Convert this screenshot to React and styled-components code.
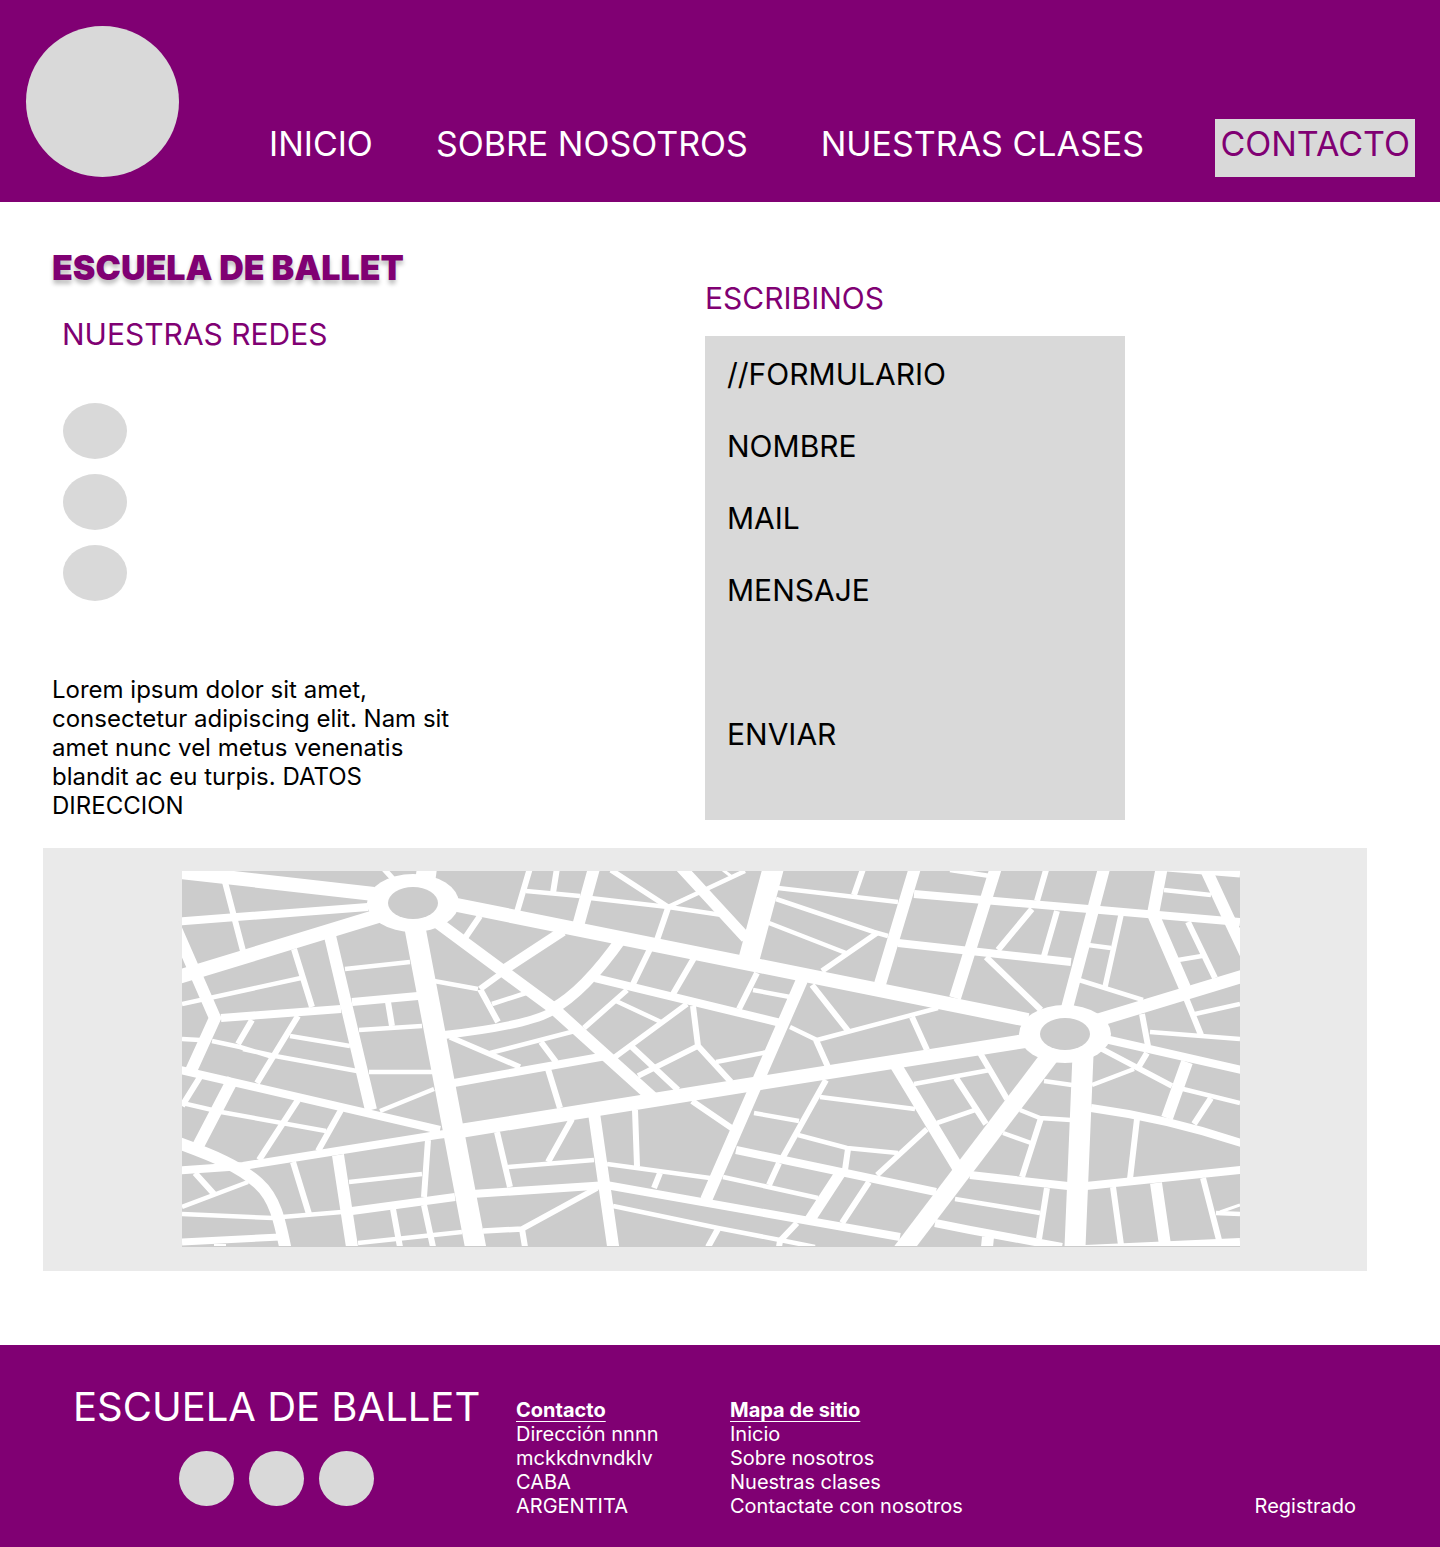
import React from "react";
import styled, { createGlobalStyle } from "styled-components";

const purple = "#800073";
const placeholder = "#d9d9d9";

const GlobalStyle = createGlobalStyle`
  *, *::before, *::after { box-sizing: border-box; }
  body {
    margin: 0;
    background: #fff;
    color: #000;
    font-family: Inter, "Liberation Sans", sans-serif;
  }
  h1, h2, h3, p, ul { margin: 0; padding: 0; font-weight: 400; }
  ul { list-style: none; }
  a { color: inherit; text-decoration: none; }
`;

/* Header */

const Header = styled.header`
  display: flex;
  justify-content: space-between;
  align-items: flex-end;
  gap: 90px;
  padding: 26px 25px 25px 26px;
  background: ${purple};
`;

const Logo = styled.a`
  flex: none;
  width: 153px;
  height: 151px;
  border-radius: 50%;
  background: ${placeholder};
`;

const Nav = styled.nav`
  flex: 1;
  display: grid;
  grid-template-columns: 167fr 385fr 395fr 199fr;
`;

const NavLink = styled.a`
  padding: 3px ${(p) => (p.$active ? "5px" : "0")} 12px;
  background: ${(p) => (p.$active ? placeholder : "transparent")};
  color: ${(p) => (p.$active ? purple : "#fff")};
  font-size: 34px;
  line-height: 43px;
  white-space: nowrap;
`;

/* Contact section */

const Columns = styled.div`
  display: grid;
  grid-template-columns: 653fr 735fr;
  padding: 45px 0 28px 52px;
`;

const Title = styled.h1`
  color: ${purple};
  font-size: 34px;
  font-weight: 900;
  line-height: 42px;
  text-shadow: 0 4px 4px rgba(0, 0, 0, 0.25);
`;

const SectionTitle = styled.h2`
  color: ${purple};
  font-size: 30px;
  line-height: 36px;
`;

const Networks = styled.section`
  padding: 27px 10px 74px;
`;

const NetworkList = styled.ul`
  display: grid;
  gap: 15px;
  padding: 51px 1px 0;
`;

const NetworkLink = styled.a`
  display: block;
  width: 64px;
  height: 56px;
  border-radius: 50%;
  background: ${placeholder};
`;

const Address = styled.p`
  max-width: 420px;
  font-size: 24px;
  line-height: 29px;
`;

const WriteUs = styled.section`
  padding-top: 33px;
`;

const Form = styled.form`
  display: grid;
  gap: 36px;
  max-width: 420px;
  margin-top: 20px;
  padding: 20px 22px 68px;
  background: ${placeholder};
  font-size: 30px;
  line-height: 36px;
`;

const Field = styled.div`
  display: flex;
  gap: 16px;
  height: ${(p) => (p.$tall ? "108px" : "36px")};
`;

const Input = styled.input`
  flex: 1;
  min-width: 0;
  height: 100%;
  padding: 0;
  border: 0;
  outline: 0;
  resize: none;
  background: transparent;
  font: inherit;
`;

const Submit = styled.button`
  justify-self: start;
  padding: 0;
  border: 0;
  background: transparent;
  color: inherit;
  font: inherit;
  cursor: pointer;
`;

/* Map */

const MapPanel = styled.section`
  margin: 0 73px 74px 43px;
  padding: 23px 127px 24px 139px;
  background: #eaeaea;
`;

const MapDrawing = styled.svg`
  display: block;
  width: 100%;
  height: auto;
  background: #ccc;
`;

/* Streets grouped by the width of the road. */
const streets = [
  [3, "M723 870L732 877M1220 1212L1240 1205"],
  [
    4.5,
    "M526 891L580 896M590 898L668 907L722 915M668 907L745 871M778 888L898 902M776 899L874 932L888 936M769 923L846 953M950 870L990 876M1164 890L1211 895M1178 960L1202 956M1079 980L1143 1000M1088 945L1111 948M1195 1014L1240 1004M1150 1032L1240 1039M1092 1085L1134 1069M1183 1089L1240 1103M182 1004L301 978M345 969L410 962M359 1030L422 1026M182 1039L200 1040M212 1041L240 1047L273 1057M243 1049L275 1056L357 1071M290 1036L350 1046M182 1103L221 1112L326 1131M369 1072L432 1072M380 1111L434 1089M349 1182L422 1174M182 1207L248 1182M182 1214L273 1218M282 1217L342 1212M358 1243L462 1232M508 1167L594 1160M607 1164L710 1178M613 1206L718 1228L780 1240L815 1247M490 1053L575 1031M434 981L478 989M492 1004L526 993M616 1001L661 1022M716 1062L768 1052M753 990L790 997M790 1027L817 1040L938 1008M914 1084L990 1070M937 1123L975 1110M820 1097L915 1109M754 1113L799 1121M798 1135L847 1148L898 1153M723 1177L818 1198M955 1199L1040 1213M1044 1081L1072 1085M1020 1110L1040 1118L1071 1120M1003 1133L1031 1143M1216 1213L1240 1214",
  ],
  [
    5.5,
    "M384 869L394 880M611 870L668 907M877 933L822 971M1121 915L1105 987M1100 1048L1172 1086M483 1231L522 1229L597 1188M450 1037L520 1067M687 1004L615 1057M698 1046L638 1076M927 1129L877 1175M627 990L584 1028",
  ],
  [
    6,
    "M530 868L517 912M557 868L553 893M668 908L657 940M863 869L854 895M1046 870L1037 901M1186 998L1201 1035M1188 922L1215 978M1057 911L1044 956M1032 909L998 950M986 957L1041 1010M1142 1014L1148 1046M1147 1053L1138 1068M1211 1098L1194 1124M294 949L312 1007M225 882L243 951M388 1002L392 1026M252 1020L238 1044M298 1016L257 1083M182 1106L200 1077M298 1100L259 1160M341 1110L318 1151M428 1140L424 1197M293 1162L309 1214M195 1173L214 1194M393 1209L400 1247M424 1205L433 1247M522 1229L525 1247M497 1132L510 1187M572 1119L548 1162M635 1110L637 1166M660 1173L654 1188M718 1229L708 1247M548 1069L560 1108M541 1042L556 1062M480 989L502 973M480 989L498 1022M480 916L465 938M650 949L633 984M694 958L673 994M693 1006L698 1046L731 1082M632 1047L678 1090M757 973L739 1009M812 985L849 1032M816 1040L828 1067M912 1017L927 1050M980 1053L1007 1099M956 1078L986 1124M826 1080L783 1157M779 1163L769 1185M848 1149L845 1170M869 1182L842 1223M797 1223L780 1241L779 1247M692 1101L733 1129M1047 1188L1039 1239M1041 1118L1022 1177M1137 1119L1130 1179M1113 1187L1121 1245M1203 1178L1219 1240",
  ],
  [7, "M1167 868L1240 874M182 1242L280 1237"],
  [
    8,
    "M172 922L368 907M221 1018L341 1009M352 1002L418 996M172 1068L440 1130M460 1132L437 1135L243 1166L172 1171M551 1012Q525 1026 444 1035M914 894L1228 921L1240 922M898 943L1071 962M1105 1039L1250 1072M1091 1108Q1172 1119 1250 1146M606 1185L900 1237M352 1211L455 1197M472 1194L608 1185M454 1083L606 1056M595 978L785 1024M736 1150L936 1192M970 1175L1068 1186M1086 1186L1250 1169M935 1223L970 1230L1062 1247M1085 1249L1240 1242",
  ],
  [10, "M563 931L505 969"],
  [11, "M622 938Q584 992 552 1009M676 862L746 938M841 1172L809 1221"],
  [
    12,
    "M173 922L215 1018L190 1073M233 1079L197 1148M330 936L371 1110M173 1141C215 1156 240 1167 258 1183S280 1222 287 1256M430 917L553 1008L653 1098M596 861L578 926M917 861L880 984M998 861L955 998M1106 861L1067 1008M1163 861L1153 914L1185 988M1202 861L1228 917L1246 955M1187 1062L1167 1118M895 1064L958 1168M594 1113L615 1260M338 1155L354 1260M802 980L706 1200M220 1244L220 1247M988 1237L987 1247M1156 1183L1165 1245",
  ],
  [13, "M1095 1021L1250 974"],
  [14, "M172 979L378 916M172 871L374 894M452 904L1028 1020M1025 1041L710 1091L460 1131"],
  [18, "M1050 1056L892 1264"],
  [20, "M427 868L425 882"],
  [21, "M415 928L478 1260M776 858L749 959M1083 1055L1075 1247"],
];

const roundabouts = [
  { x: 413, y: 903 },
  { x: 1065, y: 1034 },
];

/* Footer */

const Footer = styled.footer`
  display: grid;
  grid-template-columns: 443fr 214fr 626fr;
  padding: 38px 84px 29px 73px;
  background: ${purple};
  color: #fff;
`;

const Brand = styled.div`
  justify-self: start;
  font-size: 40px;
  line-height: 48px;
  white-space: nowrap;
`;

const BrandLinks = styled.ul`
  display: flex;
  justify-content: center;
  gap: 15px;
  margin-top: 20px;
`;

const BrandLink = styled.a`
  display: block;
  width: 55px;
  height: 55px;
  border-radius: 50%;
  background: ${placeholder};
`;

const FooterColumn = styled.div`
  padding-top: 15px;
  font-size: 20px;
  line-height: 24px;
`;

const FooterTitle = styled.h3`
  font-size: 20px;
  font-weight: 700;
  line-height: 24px;
  text-decoration: underline 1px;
  text-decoration-skip-ink: none;
  text-underline-offset: 4px;
`;

const FooterEnd = styled.div`
  display: flex;
  justify-content: space-between;
  align-items: flex-end;
`;

const Registered = styled.p`
  font-size: 20px;
  line-height: 24px;
`;

const networks = ["Facebook", "Instagram", "YouTube"];

function StreetMap() {
  return (
    <MapDrawing viewBox="182 871 1058 376" role="img" aria-label="Mapa">
      <g fill="none" stroke="#fff">
        {streets.map(([width, d]) => (
          <path key={width} d={d} strokeWidth={width} />
        ))}
      </g>
      {roundabouts.map(({ x, y }) => (
        <g key={x}>
          <ellipse cx={x} cy={y} rx="46" ry="29" fill="#fff" />
          <ellipse cx={x} cy={y} rx="25" ry="16" fill="#ccc" />
        </g>
      ))}
      <path d="M182 1246.5H1240" stroke="#ccc" />
    </MapDrawing>
  );
}

export default function App() {
  return (
    <>
      <GlobalStyle />
      <Header>
        <Logo href="#inicio" aria-label="Escuela de ballet" />
        <Nav>
          <NavLink href="#inicio">INICIO</NavLink>
          <NavLink href="#nosotros">SOBRE NOSOTROS</NavLink>
          <NavLink href="#clases">NUESTRAS CLASES</NavLink>
          <NavLink href="#contacto" $active aria-current="page">
            CONTACTO
          </NavLink>
        </Nav>
      </Header>

      <main>
        <Columns>
          <div>
            <Title>ESCUELA DE BALLET</Title>
            <Networks>
              <SectionTitle>NUESTRAS REDES</SectionTitle>
              <NetworkList>
                {networks.map((name) => (
                  <li key={name}>
                    <NetworkLink href="#redes" aria-label={name} />
                  </li>
                ))}
              </NetworkList>
            </Networks>
            <Address>
              Lorem ipsum dolor sit amet, consectetur adipiscing elit. Nam sit
              amet nunc vel metus venenatis blandit ac eu turpis. DATOS
              DIRECCION
            </Address>
          </div>

          <WriteUs>
            <SectionTitle>ESCRIBINOS</SectionTitle>
            <Form onSubmit={(e) => e.preventDefault()}>
              <p>//FORMULARIO</p>
              <Field>
                <label htmlFor="nombre">NOMBRE</label>
                <Input id="nombre" type="text" />
              </Field>
              <Field>
                <label htmlFor="mail">MAIL</label>
                <Input id="mail" type="email" />
              </Field>
              <Field $tall>
                <label htmlFor="mensaje">MENSAJE</label>
                <Input as="textarea" id="mensaje" />
              </Field>
              <Submit type="submit">ENVIAR</Submit>
            </Form>
          </WriteUs>
        </Columns>

        <MapPanel>
          <StreetMap />
        </MapPanel>
      </main>

      <Footer>
        <Brand>
          <p>ESCUELA DE BALLET</p>
          <BrandLinks>
            {networks.map((name) => (
              <li key={name}>
                <BrandLink href="#redes" aria-label={name} />
              </li>
            ))}
          </BrandLinks>
        </Brand>
        <FooterColumn>
          <FooterTitle>Contacto</FooterTitle>
          <p>Dirección nnnn</p>
          <p>mckkdnvndklv</p>
          <p>CABA</p>
          <p>ARGENTITA</p>
        </FooterColumn>
        <FooterEnd>
          <FooterColumn>
            <FooterTitle>Mapa de sitio</FooterTitle>
            <ul>
              <li><a href="#inicio">Inicio</a></li>
              <li><a href="#nosotros">Sobre nosotros</a></li>
              <li><a href="#clases">Nuestras clases</a></li>
              <li><a href="#contacto">Contactate con nosotros</a></li>
            </ul>
          </FooterColumn>
          <Registered>Registrado</Registered>
        </FooterEnd>
      </Footer>
    </>
  );
}
